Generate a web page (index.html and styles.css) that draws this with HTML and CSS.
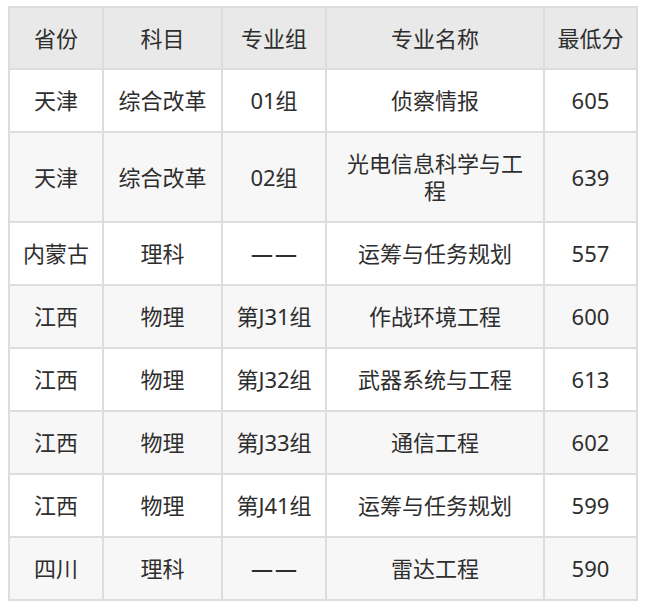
FILE: index.html
```html
<!DOCTYPE html>
<html lang="zh">
<head>
<meta charset="utf-8">
<link rel="stylesheet" href="styles.css">
</head>
<body>
<table class="score-table">
  <colgroup>
    <col class="c1"><col class="c2"><col class="c3"><col class="c4"><col class="c5">
  </colgroup>
  <thead>
    <tr><th>省份</th><th>科目</th><th>专业组</th><th>专业名称</th><th>最低分</th></tr>
  </thead>
  <tbody>
    <tr><td>天津</td><td>综合改革</td><td>01组</td><td>侦察情报</td><td>605</td></tr>
    <tr><td>天津</td><td>综合改革</td><td>02组</td><td>光电信息科学与工程</td><td>639</td></tr>
    <tr><td>内蒙古</td><td>理科</td><td><span class="dash">——</span></td><td>运筹与任务规划</td><td>557</td></tr>
    <tr><td>江西</td><td>物理</td><td>第J31组</td><td>作战环境工程</td><td>600</td></tr>
    <tr><td>江西</td><td>物理</td><td>第J32组</td><td>武器系统与工程</td><td>613</td></tr>
    <tr><td>江西</td><td>物理</td><td>第J33组</td><td>通信工程</td><td>602</td></tr>
    <tr><td>江西</td><td>物理</td><td>第J41组</td><td>运筹与任务规划</td><td>599</td></tr>
    <tr><td>四川</td><td>理科</td><td><span class="dash">——</span></td><td>雷达工程</td><td>590</td></tr>
  </tbody>
</table>
</body>
</html>
```
FILE: styles.css
```css
html, body {
  background: #ffffff;
}
body {
  margin: 6px 8px;
  font-family: "Noto Sans", "Noto Sans CJK SC", sans-serif;
  color: #2e2e2e;
}
.score-table {
  border-collapse: collapse;
  table-layout: fixed;
  width: 629px;
  font-size: 22px;
  line-height: 27px;
}
.c1 { width: 94px; }
.c2 { width: 119px; }
.c3 { width: 104px; }
.c4 { width: 218px; }
.c5 { width: 93px; }
.score-table th,
.score-table td {
  border: 2px solid #dddddd;
  padding: 17px 10px 17px;
  text-align: center;
  vertical-align: middle;
  font-weight: normal;
}
.score-table thead th {
  background: #e9e9e9;
  padding: 17px 10px 16px;
}
.score-table tbody tr:nth-child(even) td {
  background: #f7f7f7;
}
.dash {
  font-family: "Noto Sans", sans-serif;
  font-weight: 500;
  letter-spacing: 2px;
  margin-right: -2px;
}
```
